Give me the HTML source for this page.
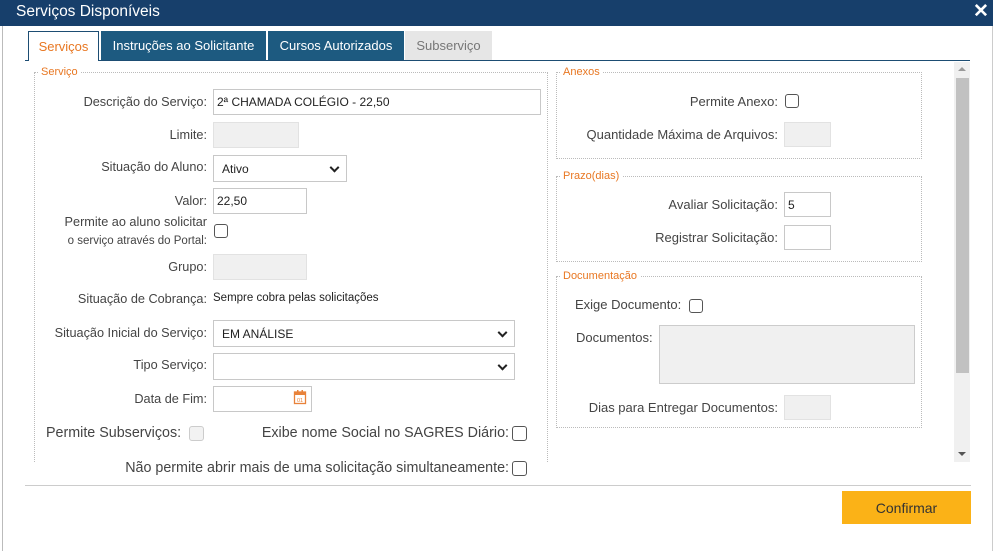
<!DOCTYPE html>
<html><head><meta charset="utf-8"><style>
*{box-sizing:border-box}
body{margin:0;width:996px;height:551px;background:#fff;font-family:"Liberation Sans",sans-serif;position:relative;overflow:hidden;color:#444}
.a{position:absolute}
.l{position:absolute;font-size:12.7px;color:#444;text-align:right;white-space:nowrap;line-height:14px}
.r{font-size:13px}
.in{position:absolute;border:1px solid #c8c8c8;background:#fff;font-size:12px;color:#222;padding:0 0 0 3px;display:flex;align-items:center}
.dis{background:#f0f0f0;border-color:#e2e2e2}
.cb{position:absolute;width:14px;height:14px;border:1px solid #555;border-radius:3px;background:#fff}
.fs{position:absolute;border:1px dotted #bbb}
.lg{position:absolute;font-size:11px;color:#e87722;background:#fff;padding:0 3px;top:-7px;left:3px;line-height:13px}
.tab{position:absolute;top:31px;height:29px;font-size:13px;display:flex;align-items:center;justify-content:center}
.chev{position:absolute;right:8px;top:50%;width:7px;height:7px;border-right:2px solid #222;border-bottom:2px solid #222;transform:translateY(-70%) rotate(45deg)}
.big{position:absolute;font-size:14.3px;color:#444;white-space:nowrap}
</style></head><body>
<div class="a" style="left:0;top:0;width:993px;height:26px;background:#173f6b"></div>
<div class="a" style="left:16px;top:3px;font-size:15.5px;color:#fff">Serviços Disponíveis</div>
<div class="a" style="left:973px;top:0px;font-size:19px;color:#fff;font-weight:bold">✕</div>
<div class="a" style="left:2px;top:26px;width:1px;height:525px;background:#bbb"></div>
<div class="a" style="left:992px;top:26px;width:1px;height:525px;background:#ccc"></div>

<div class="tab" style="left:28px;width:71px;background:#fff;border:1px solid #1d4d73;border-bottom:none;color:#e87722;height:30px">Serviços</div>
<div class="tab" style="left:101px;width:165px;background:#1d5a80;color:#fff">Instruções ao Solicitante</div>
<div class="tab" style="left:268px;width:136px;background:#1d5a80;color:#fff">Cursos Autorizados</div>
<div class="tab" style="left:405px;width:87px;background:#e6e6e6;color:#777">Subserviço</div>
<div class="a" style="left:25px;top:60px;width:3px;height:1px;background:#1d4d73"></div>
<div class="a" style="left:99px;top:60px;width:871px;height:1px;background:#1d4d73"></div>

<div class="fs" style="left:34px;top:72px;width:514px;height:420px;border-bottom:none"><span class="lg">Serviço</span></div>
<div class="a" style="left:30px;top:462px;width:530px;height:30px;background:#fff"></div>

<div class="l" style="right:789px;top:95px">Descrição do Serviço:</div>
<div class="in" style="left:213px;top:89px;width:328px;height:26px">2ª CHAMADA COLÉGIO - 22,50</div>
<div class="l" style="right:789px;top:128px">Limite:</div>
<div class="in dis" style="left:213px;top:122px;width:86px;height:26px"></div>
<div class="l" style="right:789px;top:160px">Situação do Aluno:</div>
<div class="in" style="left:213px;top:155px;width:134px;height:27px;padding-left:8px">Ativo<span class="chev"></span></div>
<div class="l" style="right:789px;top:194px">Valor:</div>
<div class="in" style="left:213px;top:188px;width:94px;height:26px">22,50</div>
<div class="l" style="right:789px;top:215px">Permite ao aluno solicitar</div>
<div class="l" style="right:789px;top:234px;font-size:11.5px">o serviço através do Portal:</div>
<div class="cb" style="left:214px;top:224px"></div>
<div class="l" style="right:789px;top:260px">Grupo:</div>
<div class="in dis" style="left:213px;top:254px;width:94px;height:26px"></div>
<div class="l" style="right:789px;top:292px">Situação de Cobrança:</div>
<div class="a" style="left:213px;top:292px;font-size:11.5px;color:#222">Sempre cobra pelas solicitações</div>
<div class="l" style="right:789px;top:326px">Situação Inicial do Serviço:</div>
<div class="in" style="left:213px;top:320px;width:302px;height:27px;padding-left:8px">EM ANÁLISE<span class="chev"></span></div>
<div class="l" style="right:789px;top:358px">Tipo Serviço:</div>
<div class="in" style="left:213px;top:353px;width:302px;height:27px"><span class="chev"></span></div>
<div class="l" style="right:789px;top:392px">Data de Fim:</div>
<div class="in" style="left:213px;top:386px;width:99px;height:26px"></div>
<svg class="a" style="left:293px;top:389px" width="14" height="16" viewBox="0 0 14 16"><rect x="1.5" y="3" width="11" height="11.5" fill="none" stroke="#e8823a" stroke-width="1.3"/><rect x="1.5" y="3" width="11" height="3" fill="#e8823a"/><rect x="4" y="1" width="1.5" height="3" fill="#e8823a"/><rect x="8.5" y="1" width="1.5" height="3" fill="#e8823a"/><text x="7" y="13" font-size="5.5" text-anchor="middle" fill="#e8823a" font-family="Liberation Sans">01</text></svg>

<div class="big" style="left:46px;top:425px">Permite Subserviços:</div>
<div class="cb" style="left:189px;top:426px;width:15px;height:15px;border-color:#ccc;background:#f2f2f2"></div>
<div class="big" style="right:487px;top:425px">Exibe nome Social no SAGRES Diário:</div>
<div class="cb" style="left:512px;top:426px;width:15px;height:15px"></div>
<div class="big" style="right:487px;top:460px">Não permite abrir mais de uma solicitação simultaneamente:</div>
<div class="cb" style="left:512px;top:461px;width:15px;height:15px"></div>

<div class="fs" style="left:556px;top:72px;width:366px;height:87px"><span class="lg">Anexos</span></div>
<div class="l r" style="right:218px;top:95px">Permite Anexo:</div>
<div class="cb" style="left:785px;top:94px"></div>
<div class="l r" style="right:218px;top:128px">Quantidade Máxima de Arquivos:</div>
<div class="in dis" style="left:784px;top:122px;width:47px;height:25px"></div>

<div class="fs" style="left:556px;top:176px;width:366px;height:86px"><span class="lg">Prazo(dias)</span></div>
<div class="l r" style="right:218px;top:198px">Avaliar Solicitação:</div>
<div class="in" style="left:784px;top:192px;width:47px;height:25px">5</div>
<div class="l r" style="right:218px;top:231px">Registrar Solicitação:</div>
<div class="in" style="left:784px;top:225px;width:47px;height:25px"></div>

<div class="fs" style="left:556px;top:276px;width:366px;height:152px"><span class="lg">Documentação</span></div>
<div class="l r" style="left:575px;top:298px;text-align:left">Exige Documento:</div>
<div class="cb" style="left:689px;top:299px"></div>
<div class="l r" style="left:576px;top:331px;text-align:left">Documentos:</div>
<div class="in dis" style="left:659px;top:325px;width:256px;height:59px;border-color:#ccc"></div>
<div class="l r" style="right:218px;top:401px">Dias para Entregar Documentos:</div>
<div class="in dis" style="left:784px;top:395px;width:47px;height:25px"></div>

<div class="a" style="left:954px;top:62px;width:16px;height:400px;background:#f0f0f0"></div>
<div class="a" style="left:956px;top:78px;width:13px;height:295px;background:#c1c1c1"></div>
<div class="a" style="left:958px;top:67px;width:0;height:0;border-left:4px solid transparent;border-right:4px solid transparent;border-bottom:4px solid #999"></div>
<div class="a" style="left:958px;top:452px;width:0;height:0;border-left:4px solid transparent;border-right:4px solid transparent;border-top:4px solid #555"></div>

<div class="a" style="left:25px;top:485px;width:946px;height:1px;background:#ccc"></div>
<div class="a" style="left:842px;top:491px;width:129px;height:33px;background:#fbb217;color:#333;font-size:14px;display:flex;align-items:center;justify-content:center">Confirmar</div>
</body></html>
